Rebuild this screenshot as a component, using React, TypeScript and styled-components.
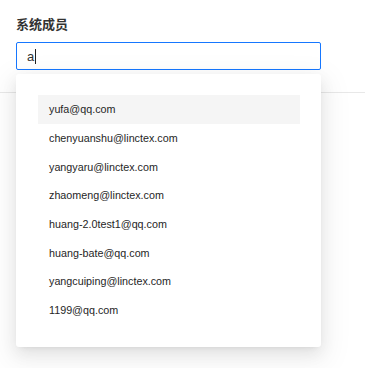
import React from 'react';
import styled, { createGlobalStyle } from 'styled-components';

const GlobalStyle = createGlobalStyle`
  html, body {
    margin: 0;
    padding: 0;
    background: #ffffff;
  }
  body {
    font-family: "Liberation Sans", Arial, "Noto Sans CJK SC", sans-serif;
  }
`;

const members = [
  'yufa@qq.com',
  'chenyuanshu@linctex.com',
  'yangyaru@linctex.com',
  'zhaomeng@linctex.com',
  'huang-2.0test1@qq.com',
  'huang-bate@qq.com',
  'yangcuiping@linctex.com',
  '1199@qq.com',
];

const App: React.FC = () => {
  return (
    <StyledPage>
      <GlobalStyle />
      <StyledSection>
        <StyledLabel>系统成员</StyledLabel>
        <StyledField>
          <StyledInput>
            a<StyledCaret />
          </StyledInput>
          <StyledDropdown>
            {members.map((m, i) => (
              <StyledOption key={m} $active={i === 0}>
                {m}
              </StyledOption>
            ))}
          </StyledDropdown>
        </StyledField>
      </StyledSection>
    </StyledPage>
  );
};

const StyledPage = styled.div`
  min-height: 100vh;
  background: #ffffff;
`;

const StyledSection = styled.div`
  padding: 14px 44px 22px 16px;
  border-bottom: 1px solid #e8e8e8;
`;

const StyledLabel = styled.div`
  font-family: "Noto Sans CJK SC", "Liberation Sans", sans-serif;
  font-size: 13px;
  font-weight: bold;
  line-height: 20px;
  color: #333333;
  margin-bottom: 8px;
`;

const StyledField = styled.div`
  position: relative;
  width: 305px;
`;

const StyledInput = styled.div`
  box-sizing: border-box;
  height: 28px;
  display: flex;
  align-items: center;
  padding: 0 10px;
  border: 1px solid #1677ff;
  border-radius: 2px;
  font-size: 13px;
  color: #333333;
`;

const StyledCaret = styled.span`
  display: inline-block;
  width: 1px;
  height: 15px;
  margin-left: 1px;
  background: #222222;
`;

const StyledDropdown = styled.div`
  position: absolute;
  top: calc(100% + 4px);
  left: 0;
  width: 100%;
  box-sizing: border-box;
  padding: 21px 21px 22px 22px;
  background: #ffffff;
  border-radius: 3px;
  box-shadow: 0 3px 6px -4px rgba(0, 0, 0, 0.12), 0 6px 16px 0 rgba(0, 0, 0, 0.08),
    0 9px 28px 8px rgba(0, 0, 0, 0.05);
  z-index: 2;
`;

const StyledOption = styled.div<{ $active?: boolean }>`
  height: 28.7px;
  display: flex;
  align-items: center;
  padding-left: 11px;
  font-size: 10.75px;
  color: #262626;
  background: ${(props) => (props.$active ? '#f5f5f5' : 'transparent')};
`;

export default App;
